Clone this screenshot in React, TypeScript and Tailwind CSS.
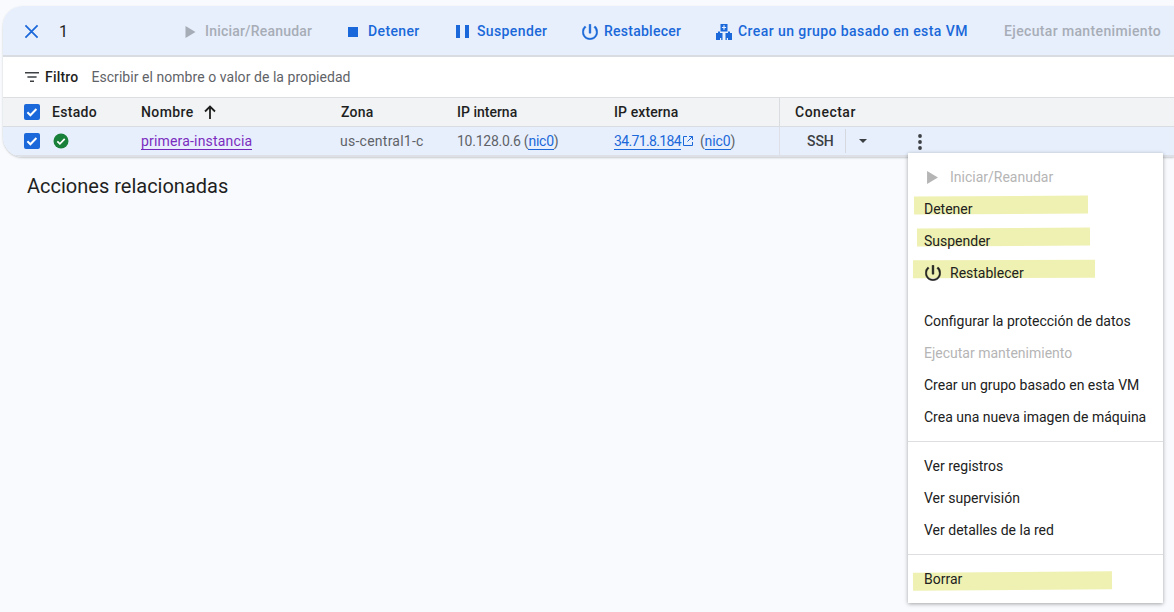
import React from "react";

const Power = ({ className = "" }: { className?: string }) => (
  <svg viewBox="3 3 18 18" className={className} fill="currentColor" stroke="currentColor" strokeWidth="0.5">
    <path d="M13 3.300h-2v10h2v-10zm4.830 1.870l-1.420 1.420A6.920 6.920 0 0 1 19 12c0 3.870-3.130 7-7 7s-7-3.130-7-7c0-2.190 1.010-4.140 2.580-5.420L6.170 5.170A8.932 8.932 0 0 0 3.300 12c0 4.800 3.900 8.700 8.700 8.700s8.700-3.900 8.700-8.700c0-2.740-.93-5.180-2.870-6.830z" />
  </svg>
);

const Play = ({ className = "" }: { className?: string }) => (
  <svg viewBox="1 1 10 12" className={className} fill="currentColor">
    <path d="M1 1v12L11 7z" />
  </svg>
);

const Check = () => (
  <span className="flex h-[16px] w-[16px] items-center justify-center rounded-[2px] bg-[#1a68d9]">
    <svg viewBox="0 0 16 16" className="h-[16px] w-[16px]" fill="none" stroke="#fff" strokeWidth="2">
      <path d="M3.400 8.200l3 3 6-6.200" />
    </svg>
  </span>
);

const Group = () => (
  <svg viewBox="0 0 16 16" className="h-[16px] w-[16px] text-[#1a68d9]" fill="currentColor">
    <path d="M4.500 0h7v7.500h-7z" />
    <path d="M2 7.500h2v1.500h2.500v7H5.200v-2H4v2H0V9h2zM12 7.500h2V9h2v7h-4v-2h-1.200v2H9.500V9H12z" />
    <path d="M7.400 1.300h1.200v1.600h1.500v1.200H8.600v1.600H7.400V4.100H5.900V2.900h1.500z" fill="#e7effc" />
  </svg>
);

const Action = ({ icon, label, w, dim, t }: { icon?: React.ReactNode; label: string; w: string; dim?: boolean; t?: string }) => (
  <div className={`flex items-center text-[14px] font-medium ${t ?? "tracking-[0.38px]"} ${w} ${dim ? "text-[#a7adb7]" : "text-[#1a68d9]"}`}>
    {icon}
    <span className="whitespace-nowrap">{label}</span>
  </div>
);

const Highlight = ({ className }: { className: string }) => (
  <span className={`absolute bg-[#eff1b2] ${className}`} />
);

const Item = ({ label, dim, icon, children }: { label: string; dim?: boolean; icon?: React.ReactNode; children?: React.ReactNode }) => (
  <div className={`relative flex h-[32px] items-center pl-[16px] text-[14px] ${dim ? "text-[#b5b5b5]" : "text-[#212121]"}`}>
    {children}
    {icon && <span className="relative mr-[9px] flex w-[17px] items-center justify-center">{icon}</span>}
    <span className="relative whitespace-nowrap">{label}</span>
  </div>
);

const Divider = () => <div className="my-[8px] h-px bg-[#dcdee2]" />;

export default function App() {
  return (
    <div className="relative h-[612px] w-[1174px] overflow-hidden bg-[#f8fafd] pt-[6px] pl-[3px] text-[#1f1f1f] [font-family:Roboto,'Liberation_Sans',sans-serif]">
      <div className="w-[1171px] overflow-hidden rounded-l-[20px] shadow-[0_1px_2px_rgba(60,64,67,0.25)]">
        {/* Toolbar */}
        <div className="flex h-[51px] items-center border-b-2 border-[#d9dce1] bg-[#e7effc] pt-[2px]">
          <svg viewBox="0 0 16 16" className="ml-[21px] h-[15px] w-[15px] text-[#1a68d9]" fill="none" stroke="currentColor" strokeWidth="1.900">
            <path d="M1.500 1.500l13 13M14.500 1.500l-13 13" />
          </svg>
          <span className="ml-[20px] w-[126px] text-[16px] leading-none">1</span>
          <Action w="w-[163px]" t="tracking-[0.2px]" dim label="Iniciar/Reanudar" icon={<Play className="mr-[9px] h-[12px] w-[11px]" />} />
          <Action w="w-[108px]" label="Detener" icon={<span className="mr-[10px] h-[10px] w-[10px] bg-[#1a68d9]" />} />
          <Action w="w-[126px]" label="Suspender" icon={<span className="mr-[8px] flex h-[13px] w-[13px] justify-between"><i className="w-[4px] bg-[#1a68d9]" /><i className="w-[4px] bg-[#1a68d9]" /></span>} />
          <Action w="w-[134px]" t="tracking-[0.25px]" label="Restablecer" icon={<Power className="mr-[6px] h-[16px] w-[16px]" />} />
          <Action w="w-[288px]" t="tracking-[0.42px]" label="Crear un grupo basado en esta VM" icon={<span className="mr-[6px]"><Group /></span>} />
          <Action w="w-[160px]" t="tracking-[0.36px]" dim label="Ejecutar mantenimiento" />
        </div>
        {/* Filter */}
        <div className="flex h-[41px] items-center border-b border-[#dcdee2] bg-white pl-[22px] text-[14px]">
          <svg viewBox="0 0 14 10" className="h-[10px] w-[14px] text-[#3c4043]" fill="currentColor">
            <path d="M0 0h14v1.400H0zM2.400 4.300h9.200v1.400H2.400zM5 8.600h4V10H5z" />
          </svg>
          <span className="ml-[6px] font-medium tracking-[0.2px] text-[#1f1f1f]">Filtro</span>
          <span className="ml-[13px] tracking-[0.05px] text-[#5f6368]">Escribir el nombre o valor de la propiedad</span>
        </div>
        {/* Header */}
        <div className="flex h-[29px] items-center border-b border-[#d9dce1] bg-[#f1f3f4] text-[14px] font-medium">
          <span className="ml-[21px] w-[28px]"><Check /></span>
          <span className="w-[89px] tracking-[0.3px]">Estado</span>
          <span className="flex w-[200px] items-center tracking-[0.4px]">
            Nombre
            <svg viewBox="0 0 12 14" className="ml-[10px] h-[14px] w-[12px]" fill="none" stroke="#1f1f1f" strokeWidth="1.800">
              <path d="M6 14V1.500M1 6.500l5-5 5 5" />
            </svg>
          </span>
          <span className="w-[116px] tracking-[0.2px]">Zona</span>
          <span className="w-[157px]">IP interna</span>
          <span className="w-[165px] tracking-[0.1px]">IP externa</span>
          <span className="flex h-full items-center border-l border-[#d9dce1] pl-[15px] tracking-[0.5px]">Conectar</span>
        </div>
        {/* Row */}
        <div className="flex h-[30px] items-center border-b-2 border-[#dde1e7] bg-[#e7effc] text-[14px]">
          <span className="ml-[21px] w-[29px]"><Check /></span>
          <span className="w-[88px]">
            <svg viewBox="0 0 16 16" className="h-[16px] w-[16px]">
              <circle cx="8" cy="8" r="7.500" fill="#188038" />
              <path d="M4.300 8.300l2.600 2.600 4.800-5" fill="none" stroke="#fff" strokeWidth="1.700" />
            </svg>
          </span>
          <span className="w-[199px] tracking-[0.18px]">
            <span className="border-b border-[#7627bb] text-[#7b2cbf]">primera-instancia</span>
          </span>
          <span className="w-[117px] tracking-[0.25px] text-[#5f6368]">us-central1-c</span>
          <span className="w-[157px] whitespace-nowrap pt-[1px] tracking-[-0.25px] text-[#5f6368]">
            10.128.0.6 (<span className="border-b border-[#1a68d9] text-[#1a68d9]">nic0</span>)
          </span>
          <span className="w-[165px] whitespace-nowrap pt-[1px] text-[#5f6368]">
            <span className="border-b border-[#1a68d9] tracking-[-0.65px] text-[#1a68d9]">34.71.8.184</span>
            <svg viewBox="0 0 12 12" className="ml-[1px] inline h-[12px] w-[12px] align-[-1px] text-[#1a68d9]" fill="none" stroke="currentColor" strokeWidth="1">
              <path d="M5 1.500H1.500v9h9V7M7 1.500h3.500V5M10.500 1.500L5.500 6.500" />
            </svg>
            <span className="ml-[6px] tracking-[-0.1px]">(<span className="border-b border-[#1a68d9] text-[#1a68d9]">nic0</span>)</span>
          </span>
          <span className="flex h-full items-center border-l border-[#dde1e7]">
            <span className="ml-[27px] w-[38px] font-medium tracking-[-0.1px] text-[#3c4043]">SSH</span>
            <span className="h-[24px] w-px bg-[#d5d9df]" />
            <svg viewBox="0 0 8 4" className="ml-[13px] h-[4px] w-[8px] text-[#3c4043]" fill="currentColor">
              <path d="M0 0h8L4 4z" />
            </svg>
            <svg viewBox="0 0 4 16" className="ml-[51px] mt-[1px] h-[16px] w-[4px] text-[#3c4043]" fill="currentColor">
              <circle cx="2" cy="2" r="1.900" />
              <circle cx="2" cy="8" r="1.900" />
              <circle cx="2" cy="14" r="1.900" />
            </svg>
          </span>
        </div>
      </div>

      <h2 className="mt-[16px] ml-[24px] text-[20px] leading-[26px] text-[#1f1f1f]">Acciones relacionadas</h2>

      {/* Menu */}
      <div className="absolute top-[153px] left-[908px] w-[255px] bg-white py-[8px] shadow-[0_1px_4px_rgba(0,0,0,0.35)]">
        <Item dim label="Iniciar/Reanudar" icon={<Play className="h-[13px] w-[11px] text-[#b5b5b5]" />} />
        <Item label="Detener"><Highlight className="top-[3px] left-[6px] h-[18px] w-[174px] -rotate-[0.3deg]" /></Item>
        <Item label="Suspender"><Highlight className="top-[3px] left-[9px] h-[18px] w-[173px] -rotate-[0.3deg]" /></Item>
        <Item label="Restablecer" icon={<Power className="h-[16px] w-[16px] text-[#212121]" />}><Highlight className="top-[3px] left-[5px] h-[18px] w-[182px] -rotate-[0.2deg]" /></Item>
        <div className="h-[16px]" />
        <Item label="Configurar la protección de datos" />
        <Item dim label="Ejecutar mantenimiento" />
        <Item label="Crear un grupo basado en esta VM" />
        <Item label="Crea una nueva imagen de máquina" />
        <Divider />
        <Item label="Ver registros" />
        <Item label="Ver supervisión" />
        <Item label="Ver detalles de la red" />
        <Divider />
        <Item label="Borrar"><Highlight className="top-[9px] left-[5px] h-[18px] w-[199px] -rotate-[0.5deg]" /></Item>
      </div>
    </div>
  );
}
